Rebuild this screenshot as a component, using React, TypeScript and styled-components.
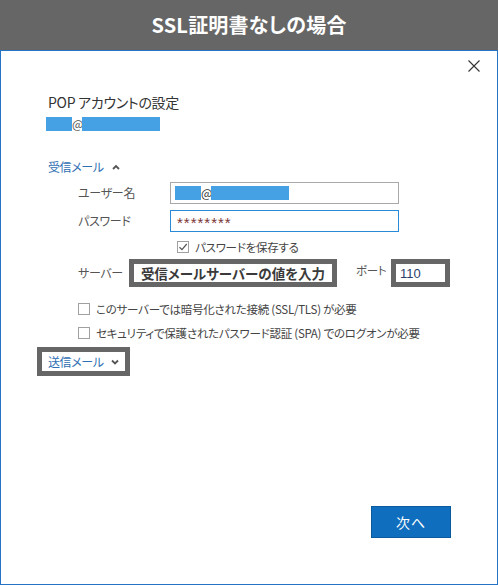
import React from "react";
import styled, { createGlobalStyle } from "styled-components";

const Global = createGlobalStyle`
  html, body { margin: 0; padding: 0; background: #fff; }
  body {
    font-family: "Noto Sans CJK JP", "Noto Sans", "Liberation Sans", sans-serif;
    font-feature-settings: "palt" 1;
    color: #333;
  }
  * { box-sizing: border-box; }
`;

const Page = styled.div`
  width: 498px;
  height: 585px;
  display: flex;
  flex-direction: column;
`;

const Banner = styled.div`
  height: 50px;
  flex: none;
  background: #666666;
  display: flex;
  align-items: center;
  justify-content: center;
  color: #fff;
  font-weight: 700;
  font-size: 20px;
  letter-spacing: 0.2px;
  padding-bottom: 1px;
`;

const Dialog = styled.div`
  flex: 1;
  border: 1px solid #2573c4;
  display: flex;
  flex-direction: column;
  background: #fff;
`;

const TopBar = styled.div`
  height: 41px;
  display: flex;
  justify-content: flex-end;
  align-items: flex-start;
  padding: 9px 17px 0 0;
`;

const CloseButton = styled.button`
  width: 12px;
  height: 12px;
  padding: 0;
  border: none;
  background: none;
  display: flex;
`;

const Body = styled.div`
  padding-left: 47px;
  display: flex;
  flex-direction: column;
  align-items: flex-start;
  white-space: nowrap;
`;

const Title = styled.div`
  font-size: 14px;
  line-height: 20px;
  letter-spacing: -0.3px;
  color: #333;
`;

const EmailRow = styled.div`
  margin-top: 5px;
  margin-left: -2px;
  height: 14px;
  display: flex;
  align-items: center;
  font-size: 12px;
  color: #555;
`;

const Redact = styled.span<{ $w: number }>`
  display: inline-block;
  width: ${(p) => p.$w}px;
  height: 14px;
  background: #46a0e4;
`;

const At = styled.span`
  width: 10px;
  text-align: center;
  font-size: 12px;
  line-height: 14px;
`;

const Incoming = styled.div`
  margin-top: 26px;
  display: flex;
  align-items: center;
  gap: 8px;
  font-size: 12px;
  letter-spacing: -0.4px;
  line-height: 20px;
  color: #2f6fb3;
`;

const FieldRow = styled.div<{ $mt: number }>`
  margin-top: ${(p) => p.$mt}px;
  padding-left: 30px;
  display: flex;
  align-items: center;
`;

const Label = styled.div<{ $w: number }>`
  width: ${(p) => p.$w}px;
  font-size: 12px;
  letter-spacing: -0.3px;
  color: #555;
  line-height: 18px;
`;

const Input = styled.div<{ $focused?: boolean }>`
  width: 229px;
  height: 22px;
  border: 1px solid ${(p) => (p.$focused ? "#2a8ad8" : "#a8a8a8")};
  display: flex;
  align-items: center;
  padding-left: 4px;
  font-size: 12px;
`;

const Stars = styled.span`
  color: #7a3434;
  font-family: "Liberation Sans", sans-serif;
  font-size: 15px;
  line-height: 15px;
  letter-spacing: 1px;
  padding-left: 2px;
  padding-top: 2px;
`;

const CheckRow = styled.div<{ $mt: number; $indent: number }>`
  margin-top: ${(p) => p.$mt}px;
  padding-left: ${(p) => p.$indent}px;
  height: 16px;
  display: flex;
  align-items: center;
  gap: 6px;
  font-size: 11.5px;
  letter-spacing: -0.25px;
  color: #444;
`;

const Box = styled.span`
  width: 12px;
  height: 12px;
  border: 1px solid #a0a0a0;
  background: #fff;
  display: flex;
  align-items: center;
  justify-content: center;
  flex: none;
`;

const Note = styled.div<{ $w: number }>`
  width: ${(p) => p.$w}px;
  height: 28px;
  border: 5px solid #666666;
  background: #fff;
  display: flex;
  align-items: center;
`;

const ServerNote = styled(Note)`
  justify-content: center;
  font-weight: 700;
  font-size: 13.5px;
  color: #3a3a3a;
  letter-spacing: 0px;
`;

const PortLabel = styled.div`
  margin-left: 19px;
  width: 35px;
  font-size: 11.5px;
  letter-spacing: -0.3px;
  color: #555;
  margin-top: -6px;
`;

const PortNote = styled(Note)`
  padding-left: 4px;
  font-family: "Liberation Sans", sans-serif;
  font-size: 13px;
  color: #2b3e6a;
`;

const OutgoingNote = styled.div`
  margin-top: 6px;
  margin-left: -11px;
  width: 93px;
  height: 29px;
  border: 5px solid #666666;
  background: #fff;
  display: flex;
  align-items: center;
  padding-left: 6px;
  gap: 7px;
  font-size: 12px;
  letter-spacing: -0.4px;
  color: #2f6fb3;
`;

const Spacer = styled.div`
  flex: 1;
`;

const Footer = styled.div`
  display: flex;
  justify-content: flex-end;
  padding: 0 46px 46px 0;
`;

const NextButton = styled.button`
  width: 80px;
  height: 32px;
  background: #106ebe;
  border: 1px solid #0b5a9e;
  color: #fff;
  font-family: inherit;
  font-size: 14px;
  letter-spacing: 1px;
  padding: 0;
`;

const CloseIcon = () => (
  <svg width="12" height="12" viewBox="0 0 12 12">
    <path d="M0.5 0.5 L11.5 11.5 M11.5 0.5 L0.5 11.5" stroke="#333" strokeWidth="1.1" fill="none" />
  </svg>
);

const Chevron = ({ up }: { up?: boolean }) => (
  <svg width="8" height="6" viewBox="0 0 8 6">
    <path
      d={up ? "M1 5 L4 2 L7 5" : "M1 1.5 L4 4.5 L7 1.5"}
      stroke="#555"
      strokeWidth="1.8"
      fill="none"
    />
  </svg>
);

const Check = () => (
  <svg width="10" height="10" viewBox="0 0 10 10">
    <path d="M1.5 5.2 L4 7.6 L8.7 2" stroke="#555" strokeWidth="1.2" fill="none" />
  </svg>
);

export default function App() {
  return (
    <Page>
      <Global />
      <Banner>SSL証明書なしの場合</Banner>
      <Dialog>
        <TopBar>
          <CloseButton aria-label="閉じる">
            <CloseIcon />
          </CloseButton>
        </TopBar>
        <Body>
          <Title>POP アカウントの設定</Title>
          <EmailRow>
            <Redact $w={26} />
            <At>@</At>
            <Redact $w={78} />
          </EmailRow>
          <Incoming>
            受信メール
            <Chevron up />
          </Incoming>
          <FieldRow $mt={5}>
            <Label $w={92}>ユーザー名</Label>
            <Input>
              <Redact $w={26} />
              <At>@</At>
              <Redact $w={78} />
            </Input>
          </FieldRow>
          <FieldRow $mt={6}>
            <Label $w={92}>パスワード</Label>
            <Input $focused>
              <Stars>********</Stars>
            </Input>
          </FieldRow>
          <CheckRow $mt={7} $indent={129}>
            <Box>
              <Check />
            </Box>
            パスワードを保存する
          </CheckRow>
          <FieldRow $mt={4}>
            <Label $w={51}>サーバー</Label>
            <ServerNote $w={208}>受信メールサーバーの値を入力</ServerNote>
            <PortLabel>ポート</PortLabel>
            <PortNote $w={59}>110</PortNote>
          </FieldRow>
          <CheckRow $mt={14} $indent={30}>
            <Box />
            このサーバーでは暗号化された接続 (SSL/TLS) が必要
          </CheckRow>
          <CheckRow $mt={8} $indent={30}>
            <Box />
            セキュリティで保護されたパスワード認証 (SPA) でのログオンが必要
          </CheckRow>
          <OutgoingNote>
            送信メール
            <Chevron />
          </OutgoingNote>
        </Body>
        <Spacer />
        <Footer>
          <NextButton>次へ</NextButton>
        </Footer>
      </Dialog>
    </Page>
  );
}
